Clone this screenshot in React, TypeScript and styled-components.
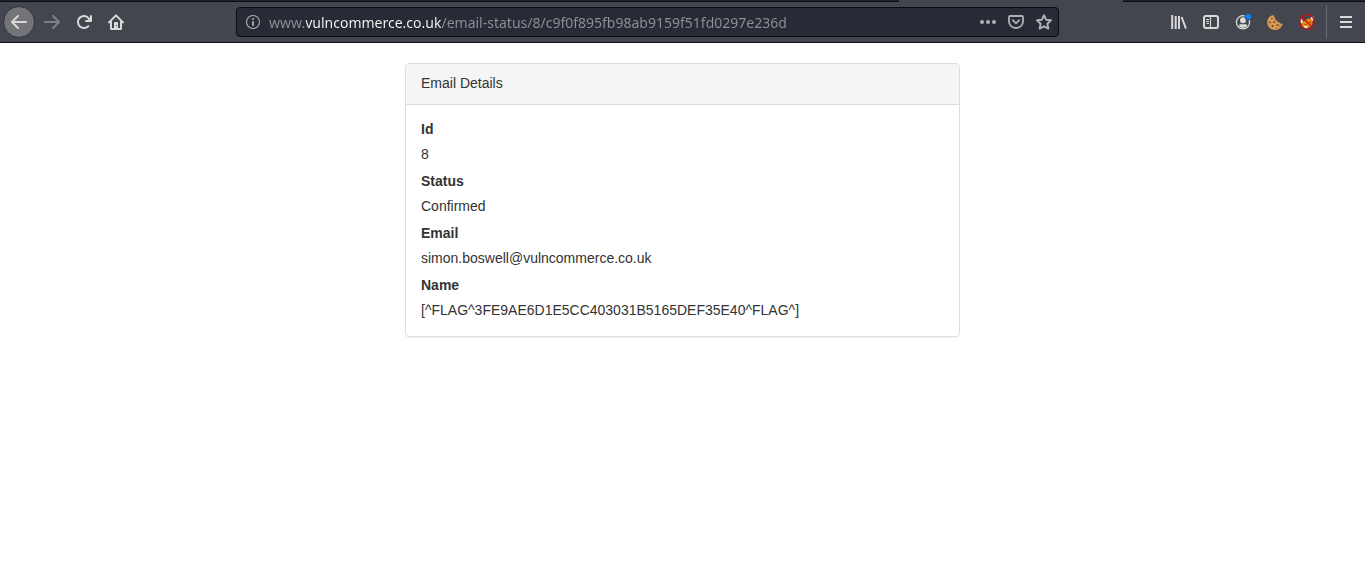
import React from "react";
import styled, { createGlobalStyle } from "styled-components";

const GlobalStyle = createGlobalStyle`
  * { box-sizing: border-box; }
  body {
    margin: 0;
    background: #fff;
    color: #333;
    font-family: "Liberation Sans", Arial, sans-serif;
    font-size: 14px;
    line-height: 20px;
  }
`;

const TabStrip = styled.div`
  display: flex;
  height: 2px;
  background: #43464e;
`;

const InactiveTabs = styled.div<{ $grow: number }>`
  flex: ${(p) => p.$grow} 1 0;
  background: #22232f;
  border-bottom: 1px solid #0c0c0d;
`;

const ActiveTab = styled.div`
  flex: none;
  width: 224px;
`;

const Toolbar = styled.header`
  display: flex;
  align-items: center;
  height: 41px;
  padding: 0 3px;
  background: #43464e;
  border-bottom: 1px solid #0c0c0d;
  color: #d9d9d7;
`;

const ToolGroup = styled.nav`
  display: flex;
  align-items: center;
`;

const ToolButton = styled.button<{ $dim?: boolean }>`
  display: flex;
  align-items: center;
  justify-content: center;
  width: 32px;
  height: 32px;
  padding: 0;
  border: 0;
  background: none;
  color: inherit;
  opacity: ${(p) => (p.$dim ? 0.4 : 1)};
`;

const BackButton = styled(ToolButton)`
  margin-right: 1px;
  border: 1px solid #303238;
  border-radius: 50%;
  background: #737478;
`;

const AddressBar = styled.form`
  display: flex;
  align-items: center;
  flex: 1;
  height: 30px;
  margin: 0 104px;
  padding-left: 8px;
  border: 1px solid #0c0c0d;
  border-radius: 4px;
  background: #282a36;
  color: #b1b1b3;
`;

const AddressInput = styled.input`
  flex: 1;
  min-width: 0;
  height: 28px;
  margin-left: 8px;
  padding: 0;
  border: 0;
  outline: 0;
  background: linear-gradient(
    to right,
    #8f9097 37px,
    #f9f9fa 37px,
    #f9f9fa 172px,
    #8f9097 172px
  );
  background-clip: text;
  -webkit-background-clip: text;
  color: transparent;
  font-family: "Noto Sans", sans-serif;
  font-size: 14px;
`;

const AddressAction = styled.button`
  display: flex;
  align-items: center;
  justify-content: center;
  width: 28px;
  height: 28px;
  padding: 0;
  border: 0;
  background: none;
  color: inherit;
`;

const InfoButton = styled(AddressAction)`
  width: 16px;
`;

const Divider = styled.span`
  width: 1px;
  height: 34px;
  margin: 0 3px;
  background: #6a6c72;
`;

const Page = styled.main`
  padding: 20px 15px;
`;

const Panel = styled.section`
  max-width: 555px;
  margin: 0 auto;
  border: 1px solid #ddd;
  border-radius: 4px;
  box-shadow: 0 1px 1px rgba(0, 0, 0, 0.05);
`;

const PanelHeading = styled.h1`
  margin: 0;
  padding: 9px 15px 11px;
  border-bottom: 1px solid #ddd;
  border-radius: 3px 3px 0 0;
  background: #f5f5f5;
  font-size: 14px;
  font-weight: 400;
`;

const Details = styled.dl`
  display: flex;
  flex-direction: column;
  gap: 7px;
  margin: 0;
  padding: 14px 15px 16px;
`;

const Field = styled.div`
  display: flex;
  flex-direction: column;
  gap: 5px;
`;

const Term = styled.dt`
  font-weight: 700;
`;

const Value = styled.dd`
  margin: 0;
  overflow-wrap: anywhere;
`;

function Icon({ children }: { children: React.ReactNode }) {
  return (
    <svg width="16" height="16" viewBox="0 0 16 16" fill="currentColor" aria-hidden="true">
      {children}
    </svg>
  );
}

const arrow =
  "M15 7H3.414l4.293-4.293a1 1 0 0 0-1.414-1.414l-6 6a1 1 0 0 0 0 1.414l6 6a1 1 0 0 0 1.414-1.414L3.414 9H15a1 1 0 0 0 0-2z";

const fields = [
  { term: "Id", value: "8" },
  { term: "Status", value: "Confirmed" },
  { term: "Email", value: "simon.boswell@vulncommerce.co.uk" },
  { term: "Name", value: "[^FLAG^3FE9AE6D1E5CC403031B5165DEF35E40^FLAG^]" },
];

export default function App() {
  return (
    <>
      <GlobalStyle />
      <TabStrip>
        <InactiveTabs $grow={899} />
        <ActiveTab />
        <InactiveTabs $grow={242} />
      </TabStrip>
      <Toolbar>
        <ToolGroup aria-label="Navigation">
          <BackButton type="button" aria-label="Back">
            <Icon><path d={arrow} /></Icon>
          </BackButton>
          <ToolButton type="button" aria-label="Forward" $dim>
            <Icon><path d={arrow} transform="matrix(-1 0 0 1 16 0)" /></Icon>
          </ToolButton>
          <ToolButton type="button" aria-label="Reload">
            <Icon>
              <path d="M15 1a1 1 0 0 0-1 1v2.418A6.995 6.995 0 1 0 8 15a6.954 6.954 0 0 0 4.95-2.05 1 1 0 0 0-1.414-1.414A5.019 5.019 0 1 1 12.549 6H10a1 1 0 0 0 0 2h5a1 1 0 0 0 1-1V2a1 1 0 0 0-1-1z" />
            </Icon>
          </ToolButton>
          <ToolButton type="button" aria-label="Home">
            <Icon>
              <path d="M1 8.4L8 1.4l7 7M3 7.5V15h10V7.5" fill="none" stroke="currentColor" strokeWidth="2" strokeLinecap="round" strokeLinejoin="round" />
              <path fillRule="evenodd" d="M6 15V9a1 1 0 0 1 1-1h2a1 1 0 0 1 1 1v6zM8 11h1v1H8z" />
            </Icon>
          </ToolButton>
        </ToolGroup>

        <AddressBar onSubmit={(e) => e.preventDefault()}>
          <InfoButton type="button" aria-label="Site information">
            <Icon>
              <circle cx="8" cy="8" r="6.5" fill="none" stroke="currentColor" strokeWidth="1.1" />
              <circle cx="8" cy="4.9" r="1" />
              <rect x="7.1" y="7" width="1.8" height="5" rx=".8" />
            </Icon>
          </InfoButton>
          <AddressInput
            aria-label="Address"
            spellCheck={false}
            defaultValue="www.vulncommerce.co.uk/email-status/8/c9f0f895fb98ab9159f51fd0297e236d"
          />
          <AddressAction type="button" aria-label="Page actions">
            <Icon>
              <circle cx="2" cy="8" r="2" />
              <circle cx="8" cy="8" r="2" />
              <circle cx="14" cy="8" r="2" />
            </Icon>
          </AddressAction>
          <AddressAction type="button" aria-label="Save to Pocket">
            <Icon>
              <path d="M2 2h12a1 1 0 0 1 1 1v4.5a7 6.5 0 0 1-14 0V3a1 1 0 0 1 1-1z" fill="none" stroke="currentColor" strokeWidth="1.8" />
              <path d="M4.8 6.2L8 9.3l3.2-3.1" fill="none" stroke="currentColor" strokeWidth="1.8" strokeLinecap="round" strokeLinejoin="round" />
            </Icon>
          </AddressAction>
          <AddressAction type="button" aria-label="Bookmark this page">
            <Icon>
              <path d="M8 1.2l2.1 4.500 4.900.600-3.600 3.400 1 4.900L8 12.300l-4.400 2.300 1-4.900L1 6.300l4.900-.600z" fill="none" stroke="currentColor" strokeWidth="1.9" strokeLinejoin="round" />
            </Icon>
          </AddressAction>
        </AddressBar>

        <ToolGroup aria-label="Tools">
          <ToolButton type="button" aria-label="Library">
            <Icon>
              <path d="M1.200 1v14M4.700 2v13M8 2v13M10.600 3l4.300 11.500" fill="none" stroke="currentColor" strokeWidth="2" />
            </Icon>
          </ToolButton>
          <ToolButton type="button" aria-label="Sidebars">
            <Icon>
              <rect x="1" y="2" width="14" height="12" rx="2" fill="none" stroke="currentColor" strokeWidth="2" />
              <path d="M7.5 2v12M3 5.5h3M3 7.5h3M3.5 9.5H6" fill="none" stroke="currentColor" strokeWidth="1.1" />
            </Icon>
          </ToolButton>
          <ToolButton type="button" aria-label="Account">
            <Icon>
              <circle cx="8" cy="8.300" r="6.600" fill="none" stroke="currentColor" strokeWidth="1.300" />
              <circle cx="8" cy="6.300" r="3" />
              <path d="M3.400 11.300c1-.8 2.200-1.200 2.800-1.300q1.800.8 3.600 0c.6.100 1.800.5 2.800 1.300a5.300 5.300 0 0 1-9.200 0z" />
              <circle cx="13.300" cy="2.700" r="3.600" fill="#43464e" />
              <circle cx="13.300" cy="2.700" r="2.700" fill="#0a84ff" />
            </Icon>
          </ToolButton>
          <ToolButton type="button" aria-label="Cookie editor">
            <Icon>
              <path d="M6.500 1C3 1.200.2 4.500.2 8.400A7.700 7.500 0 0 0 8 16c4 0 7.200-2.700 7.800-6.500-1.500.6-2.600.1-2.800-1-1.500.4-2.900-.3-2.800-1.800-2-.3-2.600-1.900-1.900-3.200C7.200 3.300 6.600 2.200 6.500 1z" fill="#d99a55" />
              <g fill="#703818">
                <circle cx="5" cy="4.500" r=".8" />
                <circle cx="3" cy="8.300" r=".9" />
                <circle cx="7.300" cy="8" r=".9" />
                <circle cx="5.500" cy="12" r="1" />
                <circle cx="10.500" cy="11" r=".9" />
                <circle cx="9.300" cy="14" r=".6" />
                <circle cx="13" cy="12" r=".6" />
                <path d="M10 .5h1.500V2H10zM13.800 1.300h1.500v1.500h-1.500zM11.500 4.200H13v1.500h-1.500z" />
              </g>
            </Icon>
          </ToolButton>
          <ToolButton type="button" aria-label="Proxy switcher">
            <Icon>
              <path d="M2.500 9.500c1-1.700 2.800-2.200 4.500-3.700 1.500-1.300 3.500-1.800 5-.8 1.800 1.200 2 3.800.8 6-1 1.900-3 3-5.300 3-2.500 0-4.500-1.200-5-4.500z" fill="#e8870f" />
              <path d="M1.400 4.500C3 4.800 4 6.300 4 8.300L2.300 9.500C1.300 8 1 6 1.400 4.500zM11.500 4.500c.2-1.300 1.200-2 2.800-2 .8 1.800.8 3.300-.3 4.700zM4.200 12.500l3-.9 1.800 1.600-2 1.300z" fill="#f3ece0" />
              <path d="M5.700 10.300l2-.4-.8 1.400zM10 8.500l1.800-.8-.5 1.500z" fill="#4b2510" />
              <circle cx="8" cy="8" r="7.300" fill="none" stroke="#c90d12" strokeWidth="1.200" />
              <path d="M3 3l10 10" stroke="#c90d12" strokeWidth="1.300" />
            </Icon>
          </ToolButton>
          <Divider />
          <ToolButton type="button" aria-label="Open menu">
            <Icon>
              <path d="M2 2h12v2H2zM2 7h12v2H2zM2 12h12v2H2z" />
            </Icon>
          </ToolButton>
        </ToolGroup>
      </Toolbar>

      <Page>
        <Panel>
          <PanelHeading>Email Details</PanelHeading>
          <Details>
            {fields.map((f) => (
              <Field key={f.term}>
                <Term>{f.term}</Term>
                <Value>{f.value}</Value>
              </Field>
            ))}
          </Details>
        </Panel>
      </Page>
    </>
  );
}
